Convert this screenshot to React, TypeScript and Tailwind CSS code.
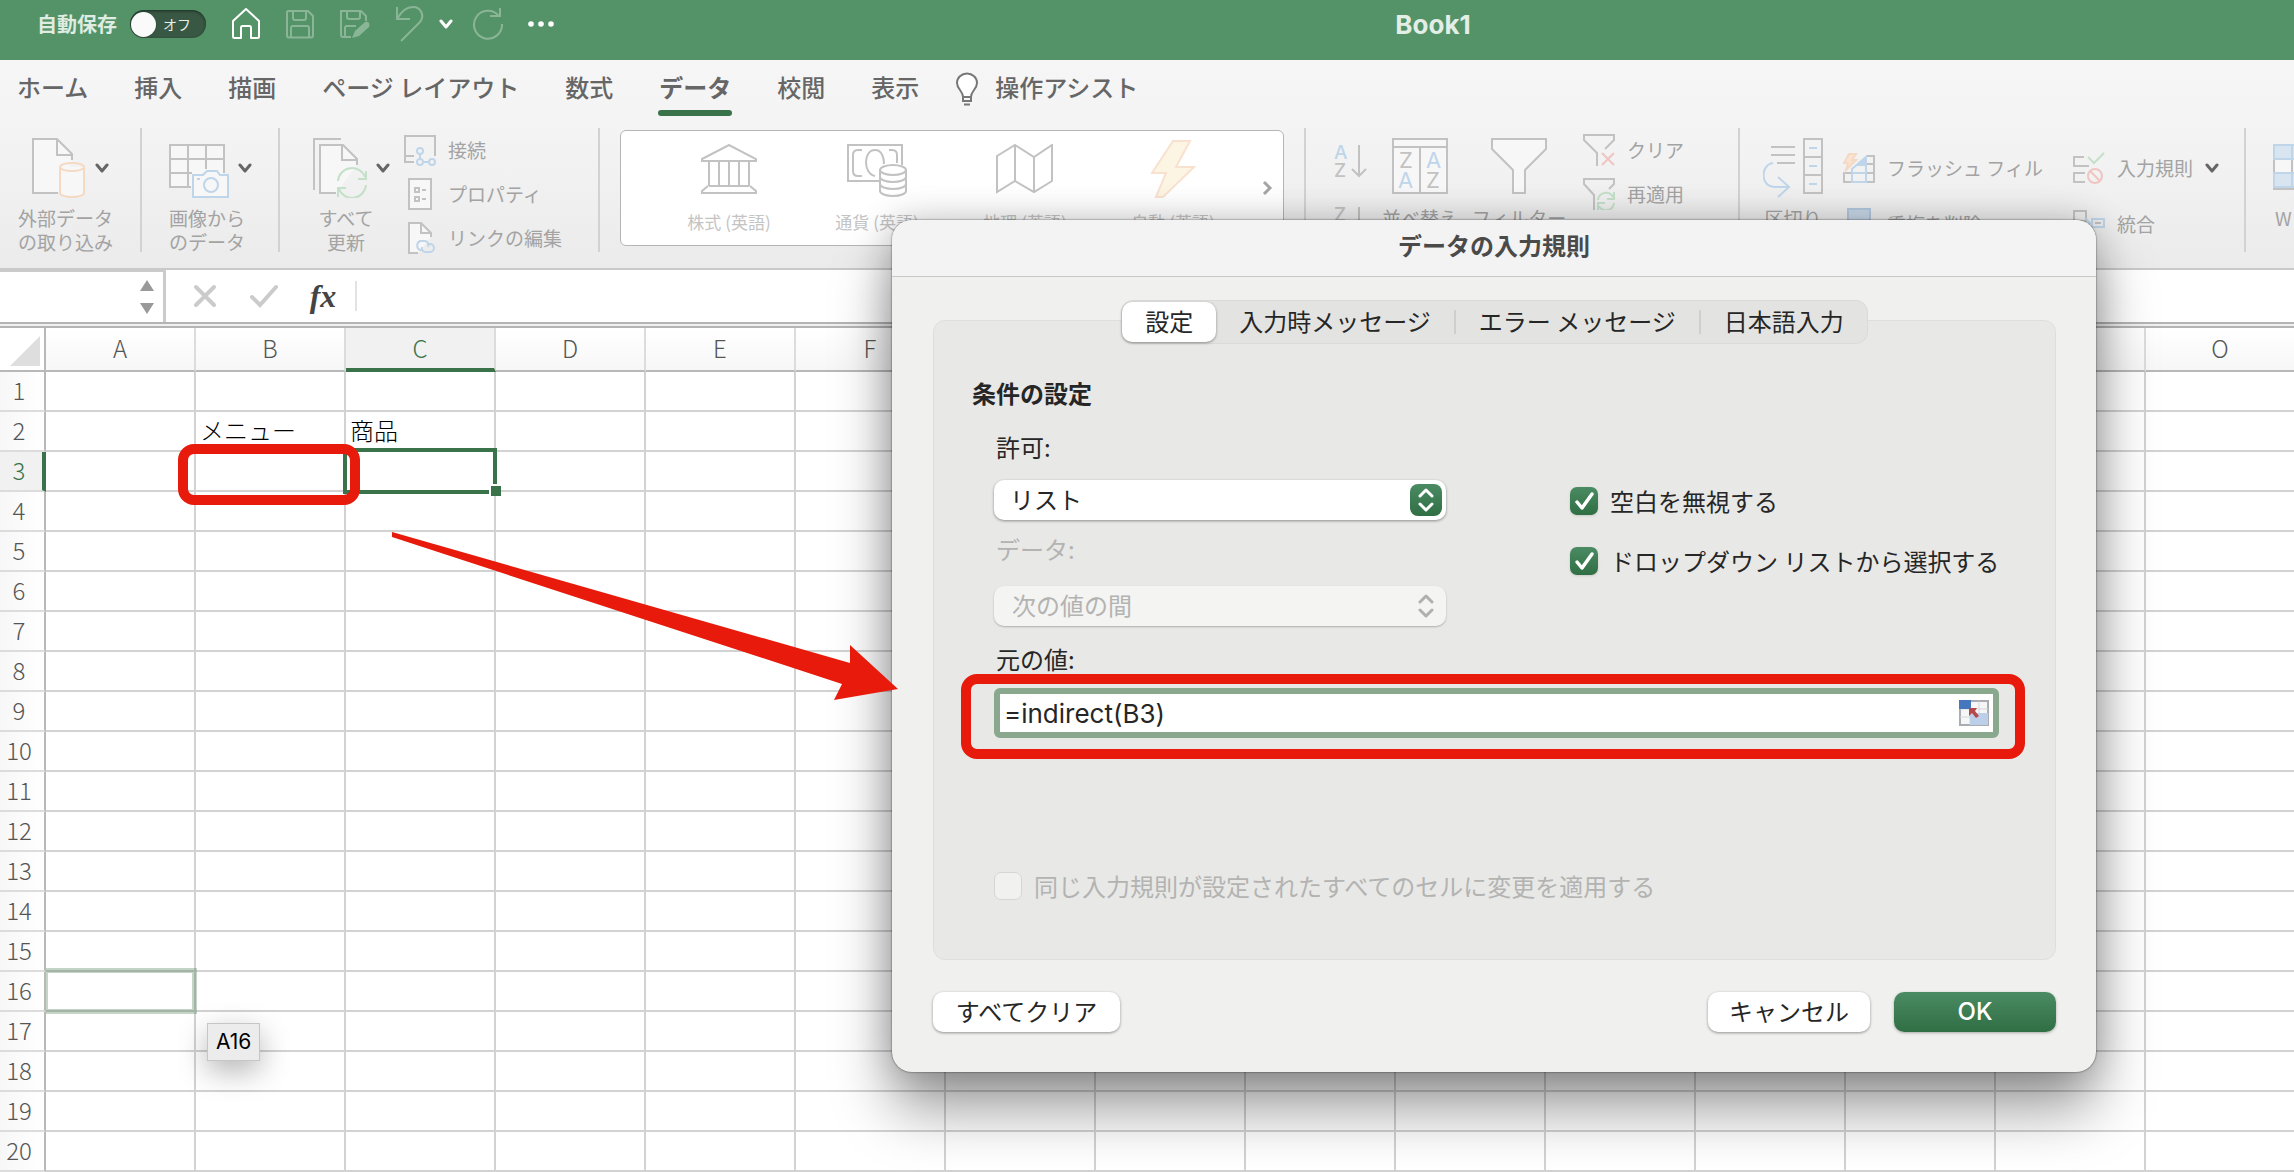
import type { ReactNode } from 'react';

const COLUMNS = ['A', 'B', 'C', 'D', 'E', 'F', 'G', 'H', 'I', 'J', 'K', 'L', 'M', 'N', 'O'];
const ROWS = Array.from({ length: 20 }, (_, i) => i + 1);

const CELLS: Record<string, string> = {
  B2: 'メニュー',
  C2: '商品',
};

const RIBBON_TABS = ['ホーム', '挿入', '描画', 'ページ レイアウト', '数式', 'データ', '校閲', '表示'];
const DIALOG_TABS = ['設定', '入力時メッセージ', 'エラー メッセージ', '日本語入力'];

const GRAY = '#c2c2c2';
const BLUE = '#bfd5ea';
const ORANGE = '#f4d9c3';
const GREEN = '#c5e0c8';
const RED = '#f0c4c1';

// --- Title bar ---

function TitleBar() {
  return (
    <header className="flex h-15 items-start bg-[#549368] text-white">
      <div className="flex h-12 w-[572px] shrink-0 items-center pl-[37px]">
        <span className="text-[20px] leading-7 font-bold text-[#dfece2]">自動保存</span>
        <button
          type="button"
          role="switch"
          aria-checked="false"
          aria-label="自動保存"
          className="ml-[13px] flex h-7 w-[76px] items-center rounded-full bg-[#385843] pl-px shadow-[inset_0_1px_3px_rgba(0,0,0,0.5)]"
        >
          <span className="h-[25px] w-[25px] rounded-full bg-[#fafafa] shadow-sm" />
          <span className="ml-[7px] text-[14px] leading-5 text-[#e6efe8]">オフ</span>
        </button>
        <button type="button" aria-label="ホーム" className="ml-[25px]">
          <svg width="30" height="32" viewBox="0 0 30 32" fill="none" stroke="#fff" strokeWidth="2" strokeLinejoin="round">
            <path d="M15 1 2 13v15.500q0 1.500 1.500 1.500H10V19.500q0-1.500 1.500-1.500h7q1.500 0 1.500 1.500V30h6.500q1.500 0 1.500-1.500V13Z" />
          </svg>
        </button>
        <button type="button" aria-label="保存" className="ml-6">
          <svg width="30" height="30" viewBox="0 0 30 30" fill="none" stroke="#8ab697" strokeWidth="2">
            <path d="M3 2h20l5 5v19.500q0 2-2 2H4q-2 0-2-2V3Z M8 2v7q0 2 2 2h9q2 0 2-2V2 M6 28v-9q0-2 2-2h14q2 0 2 2v9" />
          </svg>
        </button>
        <button type="button" aria-label="名前を付けて保存" className="ml-6">
          <svg width="32" height="32" viewBox="0 0 32 32" fill="none" stroke="#8ab697" strokeWidth="2">
            <path d="M12 29H4q-2 0-2-2V3h20l5 5v5 M8 3v6q0 2 2 2h9q2 0 2-2V3 M6 29V20q0-2 2-2h9" />
            <path d="M13 30l3-7 10-9q3-1 4 1t0 4L20 28Z" fill="#8ab697" stroke="none" />
          </svg>
        </button>
        <button type="button" aria-label="元に戻す" className="ml-6">
          <svg width="32" height="36" viewBox="0 0 32 36" fill="none" stroke="#8ab697" strokeWidth="2">
            <path d="M2 1v12h13 M2 13C7 4 12 1 18 1c8 0 12 9 7 15L6 35" />
          </svg>
        </button>
        <button type="button" aria-label="元に戻すの履歴" className="ml-3">
          <Chevron color="#fff" />
        </button>
        <button type="button" aria-label="繰り返し" className="ml-[18px]">
          <svg width="34" height="34" viewBox="0 0 34 34" fill="none" stroke="#8ab697" strokeWidth="2">
            <path d="M19 9h10V1 M28 9A14 14 0 1 0 31 17" />
          </svg>
        </button>
        <button type="button" aria-label="その他" className="ml-[22px]">
          <svg width="28" height="8" viewBox="0 0 28 8" fill="#fff">
            <circle cx="4" cy="4" r="2.800" />
            <circle cx="14" cy="4" r="2.800" />
            <circle cx="24" cy="4" r="2.800" />
          </svg>
        </button>
      </div>
      <h1 className="flex-1 pt-[9px] text-center font-[Inter,sans-serif] text-[26px] leading-8 font-bold text-[#e3eee6]">
        Book1
      </h1>
    </header>
  );
}

function Chevron({ color = '#666' }: { color?: string }) {
  return (
    <svg width="14" height="10" viewBox="0 0 14 10" fill="none" stroke={color} strokeWidth="3" strokeLinecap="round" strokeLinejoin="round">
      <path d="M2 2l5 6 5-6" />
    </svg>
  );
}

// --- Ribbon ---

function RibbonTabs() {
  return (
    <nav className="flex h-17 items-start gap-[46px] pt-[11px] pl-[17px] text-[24px] leading-8 font-medium text-[#666]">
      {RIBBON_TABS.map((tab) => (
        <button
          key={tab}
          type="button"
          className={
            tab === 'データ'
              ? 'relative h-10 pb-2 font-bold after:absolute after:inset-x-[-1px] after:bottom-[-5px] after:h-[6px] after:rounded-full after:bg-[#3a734a]'
              : 'h-10 pb-2'
          }
        >
          {tab}
        </button>
      ))}
      <button type="button" className="-ml-[10px] flex h-10 gap-4 pb-2">
        <svg className="mt-px" width="24" height="34" viewBox="0 0 24 34" fill="#fff" stroke="#777" strokeWidth="2">
          <path d="M8 25c0-6-6-8-6-14a10 9.500 0 0 1 20 0c0 6-6 8-6 14Z" />
          <path d="M8 25v4h8v-4 M9 32.500h6" fill="none" />
        </svg>
        操作アシスト
      </button>
    </nav>
  );
}

function Separator() {
  return <div className="h-[124px] w-0.5 shrink-0 bg-[#d2d2d2]" />;
}

function SmallButton({ icon, label, menu }: { icon: ReactNode; label: string; menu?: boolean }) {
  return (
    <button type="button" className="flex h-full w-full items-center gap-3 whitespace-nowrap">
      {icon}
      {label}
      {menu && <Chevron />}
    </button>
  );
}

function SvgIcon({ w, h, children }: { w: number; h: number; children: ReactNode }) {
  return (
    <svg className="shrink-0" width={w} height={h} viewBox={`0 0 ${w} ${h}`} fill="none" stroke={GRAY} strokeWidth="2">
      {children}
    </svg>
  );
}

function SortIcon({ top, bottom }: { top: string; bottom: string }) {
  return (
    <SvgIcon w={34} h={34}>
      <g stroke="none" fontFamily="Inter, sans-serif" fontSize="19" fontWeight="500">
        <text x="0" y="15" fill={top === 'A' ? BLUE : GRAY}>{top}</text>
        <text x="0" y="33" fill={bottom === 'A' ? BLUE : GRAY}>{bottom}</text>
      </g>
      <path d="M25 1v31 M18 25l7 7 7-7" />
    </SvgIcon>
  );
}

function GalleryItem({ icon, label }: { icon: ReactNode; label: string }) {
  return (
    <button type="button" className="flex w-[148px] flex-col items-center pt-2 text-[17px] leading-6 text-[#c4c4c4]">
      <span className="flex h-15 items-center">{icon}</span>
      <span className="mt-[11px]">{label}</span>
    </button>
  );
}

function Ribbon() {
  return (
    <div className="flex h-35 items-start overflow-hidden text-[19px] leading-6 text-[#a3a3a3]">
      <div className="w-35 shrink-0 pl-[18px]">
        <button type="button" className="pt-2.5">
          <span className="flex h-15 items-center gap-[9px] pl-[14px]">
            <SvgIcon w={54} h={60}>
              <path d="M26 55H1V1h24l15 15v6" fill="#f7f7f7" />
              <path d="M25 1v16h15" />
              <path d="M28 29v26a12 4 0 0 0 24 0V29" fill="#f7f7f7" stroke={ORANGE} />
              <ellipse cx="40" cy="29" rx="12" ry="4" stroke={ORANGE} />
            </SvgIcon>
            <Chevron />
          </span>
          <span className="mt-2 block text-center">外部データ<br />の取り込み</span>
        </button>
      </div>
      <Separator />
      <div className="w-[136px] shrink-0 pl-[27px]">
        <button type="button" className="flex flex-col items-start pt-2.5">
          <span className="flex h-15 items-center gap-[9px]">
            <SvgIcon w={60} h={60}>
              <path d="M22 49H1V7h54v28" fill="#f7f7f7" />
              <path d="M1 21h54 M1 35h22 M19 7v42 M37 7v24" />
              <path d="M24 37h10l4-4h10l3 4h8v22H24Z" fill="#f7f7f7" stroke={BLUE} />
              <circle cx="42" cy="47" r="7" stroke={BLUE} />
              <path d="M28 41h3" stroke={BLUE} />
            </SvgIcon>
            <Chevron />
          </span>
          <span className="mt-2 block text-center">画像から<br />のデータ</span>
        </button>
      </div>
      <Separator />
      <div className="flex w-[318px] shrink-0 pl-7">
        <button type="button" className="flex flex-col items-start pt-2.5">
          <span className="flex h-15 items-center gap-[9px] pl-[5px]">
            <SvgIcon w={54} h={60}>
              <path d="M1 52V1h27" />
              <path d="M23 55H7V7h23l14 14v6" fill="#f7f7f7" />
              <path d="M29 7v15h15" />
              <path d="M25 43a14 14 0 0 1 27-4 M53 33v8h-8 M53 47a14 14 0 0 1-27 4 M25 59v-9h8" stroke={GREEN} />
            </SvgIcon>
            <Chevron />
          </span>
          <span className="mt-2 block w-[76px] text-center">すべて<br />更新</span>
        </button>
        <div className="ml-[14px] grid auto-rows-[44px]">
          <SmallButton
            label="接続"
            icon={
              <SvgIcon w={32} h={32}>
                <path d="M10 28H1V2h30v20 M1 22h9" />
                <g stroke={BLUE}>
                  <circle cx="16" cy="17" r="3" />
                  <circle cx="16" cy="28" r="3" />
                  <circle cx="28" cy="28" r="3" />
                  <path d="M16 20v5 M19 28h6" />
                </g>
              </SvgIcon>
            }
          />
          <SmallButton
            label="プロパティ"
            icon={
              <SvgIcon w={32} h={32}>
                <path d="M5 1h22v30H5Z" fill="#f7f7f7" />
                <path d="M11 10h4v4h-4Z M11 19h4v4h-4Z M18 12h4 M18 21h4" />
              </SvgIcon>
            }
          />
          <SmallButton
            label="リンクの編集"
            icon={
              <SvgIcon w={32} h={32}>
                <path d="M14 31H5V1h12l10 10v4" fill="#f7f7f7" />
                <path d="M17 1v10h10" />
                <path d="M19 28h-3a5 5 0 0 1 0-9h5a4 4 0 0 1 3 6 M23 22h3a4 4 0 0 1 0 8h-5a4 4 0 0 1-3-5" stroke={BLUE} />
              </SvgIcon>
            }
          />
        </div>
      </div>
      <Separator />
      <div className="mx-5 mt-0.5 flex h-[116px] w-[664px] shrink-0 items-start rounded-md border border-[#b5b5b5] bg-white pl-[34px]">
        <GalleryItem
          label="株式 (英語)"
          icon={
            <SvgIcon w={56} h={50}>
              <path d="M1 15 28 1l27 14v2H1Z M8 17v25 M18 17v25 M28 17v25 M38 17v25 M48 17v25 M8 42h40 M7 42l-6 5v2h54v-2l-6-5" />
            </SvgIcon>
          }
        />
        <GalleryItem
          label="通貨 (英語)"
          icon={
            <SvgIcon w={60} h={56}>
              <path d="M32 40H1V4h54v20 M15 9h-4q-5 0-5 5v16q0 5 5 5h4 M42 9h3q5 0 5 5v8" />
              <path d="M28 35c-12-2-12-26 0-26 7 0 9 8 9 14" />
              <path d="M33 29v21a13 5 0 0 0 26 0V29" fill="#fff" />
              <ellipse cx="46" cy="29" rx="13" ry="5" fill="#fff" />
              <path d="M33 36a13 5 0 0 0 26 0 M33 43a13 5 0 0 0 26 0" />
            </SvgIcon>
          }
        />
        <GalleryItem
          label="地理 (英語)"
          icon={
            <SvgIcon w={58} h={50}>
              <path d="M1 12 19 1l19 12L56 1v36L38 48 19 37 1 48Z M19 1v36 M38 13v35" />
            </SvgIcon>
          }
        />
        <GalleryItem
          label="自動 (英語)"
          icon={
            <SvgIcon w={46} h={60}>
              <path d="M23 2h17L26 28h18L13 58H6l10-24H2Z" fill="#fdf5e4" stroke="#f8e2cf" />
            </SvgIcon>
          }
        />
        <button type="button" aria-label="次へ" className="mt-[49px] ml-[14px]">
          <svg width="12" height="16" viewBox="0 0 12 16" fill="none" stroke="#a5a5a5" strokeWidth="3">
            <path d="M3 2l6 6-6 6" />
          </svg>
        </button>
      </div>
      <Separator />
      <div className="flex w-[432px] shrink-0 pl-7">
        <div className="flex flex-col gap-7 pt-4">
          <button type="button" aria-label="昇順"><SortIcon top="A" bottom="Z" /></button>
          <button type="button" aria-label="降順"><SortIcon top="Z" bottom="A" /></button>
        </div>
        <button type="button" className="ml-[14px] flex w-[76px] flex-col items-center pt-2.5 whitespace-nowrap">
          <span className="flex h-15">
            <SvgIcon w={56} h={56}>
              <path d="M1 1h54v54H1Z" fill="#f7f7f7" />
              <path d="M1 9h54 M28 9v46" />
              <g stroke="none" fontFamily="Inter, sans-serif" fontSize="22">
                <text x="7" y="30" fill={GRAY}>Z</text>
                <text x="6" y="50" fill={BLUE}>A</text>
                <text x="34" y="30" fill={BLUE}>A</text>
                <text x="34" y="50" fill={GRAY}>Z</text>
              </g>
            </SvgIcon>
          </span>
          <span className="mt-2">並べ替え</span>
        </button>
        <button type="button" className="ml-[13px] flex w-24 flex-col items-center pt-2.5 whitespace-nowrap">
          <span className="flex h-15">
            <SvgIcon w={56} h={56}>
              <path d="M1 1h54v10L34 32v23H22V32L1 11Z" fill="#f7f7f7" />
            </SvgIcon>
          </span>
          <span className="mt-2">フィルター</span>
        </button>
        <div className="ml-4 grid auto-rows-[44px]">
          <SmallButton
            label="クリア"
            icon={
              <SvgIcon w={32} h={32}>
                <path d="M14 32V19L1 6V1h30v5l-9 9" />
                <path d="M19 19l12 12 M31 19 19 31" stroke={RED} />
              </SvgIcon>
            }
          />
          <SmallButton
            label="再適用"
            icon={
              <SvgIcon w={32} h={32}>
                <path d="M11 32V17L1 6V1h30v5l-5 5" />
                <path d="M15 22a8 8 0 0 1 15-3 M31 14v7h-7 M31 25a8 8 0 0 1-15 3 M15 32v-7h7" stroke={GREEN} />
              </SvgIcon>
            }
          />
        </div>
      </div>
      <Separator />
      <div className="flex w-[504px] shrink-0 pl-[23px]">
        <button type="button" className="flex w-15 flex-col items-center pt-2.5 whitespace-nowrap">
          <span className="flex h-15">
            <SvgIcon w={60} h={60}>
              <path d="M8 9h24 M8 17h24 M14 25h18" />
              <path d="M41 1h18v54H41Z M41 19h18 M41 37h18" />
              <path d="M46 10h8 M46 28h8 M46 46h8 M10 25C-3 27-3 49 12 49h13 M15 39l11 10-11 10" stroke={BLUE} />
            </SvgIcon>
          </span>
          <span className="mt-2">区切り</span>
        </button>
        <div className="ml-5 grid w-[230px] auto-rows-[56px] pt-3">
          <SmallButton
            label="フラッシュ フィル"
            icon={
              <SvgIcon w={32} h={32}>
                <path d="M24 4h7v26H1v-9h30 M24 12h7" />
                <path d="M9 30V17l14-12v25Z M9 21h14" stroke={BLUE} />
                <path d="M13 14 23 4v10Z" fill={BLUE} stroke="none" />
                <path d="M6 2h7l-4 6h4L3 18l2-7H1Z" fill="#f9e4d3" stroke={ORANGE} />
              </SvgIcon>
            }
          />
          <SmallButton
            label="重複を削除"
            icon={
              <SvgIcon w={32} h={32}>
                <path d="M5 1h22v30H5Z" fill="#c9d8e9" stroke="#b3c8e0" />
              </SvgIcon>
            }
          />
        </div>
        <div className="grid auto-rows-[56px] pt-3">
          <SmallButton
            menu
            label="入力規則"
            icon={
              <SvgIcon w={32} h={32}>
                <path d="M11 5H1v9h15 M12 21H1v9h11" />
                <path d="M15 5l6 6L31 1" stroke={GREEN} />
                <circle cx="22" cy="24" r="7" stroke={RED} />
                <path d="M17 19l10 10" stroke={RED} />
              </SvgIcon>
            }
          />
          <SmallButton
            label="統合"
            icon={
              <SvgIcon w={32} h={32}>
                <path d="M1 3h12v10H1Z M1 19h12v10H1Z" />
                <path d="M12 10l5 5-5 5 M19 11h12v8H19Z" stroke={BLUE} />
                <path d="M22 15h6" />
              </SvgIcon>
            }
          />
        </div>
      </div>
      <Separator />
      <button type="button" className="flex shrink-0 flex-col items-start pt-2.5 pl-[27px]">
        <span className="flex h-15">
          <SvgIcon w={60} h={60}>
            <path d="M1 7h58v44H1Z M19 7v44 M40 7v44" fill="#f7f7f7" />
            <path d="M1 7h58v14H1Z M1 35h58v14H1Z M19 7v14 M19 35v14" fill="#d8e4f0" stroke={BLUE} />
          </SvgIcon>
        </span>
        <span className="mt-2 pl-0.5">W</span>
      </button>
    </div>
  );
}

function FormulaBar() {
  return (
    <div className="flex h-[54px] items-center border-b-2 border-[#b4b4b4] bg-white">
      <div className="flex h-full w-[166px] items-center justify-end border-t-2 border-r-[3px] border-[#cbcbcb] pr-[9px]">
        <input aria-label="名前ボックス" className="h-full min-w-0 flex-1 px-2 text-[22px] leading-8 outline-none" />
        <svg width="14" height="34" viewBox="0 0 14 34" fill="#999">
          <path d="M7 0l7 11H0Z M0 23h14L7 34Z" />
        </svg>
      </div>
      <button type="button" aria-label="キャンセル" className="ml-[27px]">
        <svg width="24" height="24" viewBox="0 0 24 24" stroke="#cbcbcb" strokeWidth="4" strokeLinecap="round">
          <path d="M3 3l18 18 M21 3 3 21" />
        </svg>
      </button>
      <button type="button" aria-label="入力" className="ml-8">
        <svg width="30" height="24" viewBox="0 0 30 24" fill="none" stroke="#cbcbcb" strokeWidth="4" strokeLinecap="round">
          <path d="M3 13l8 8L27 3" />
        </svg>
      </button>
      <button
        type="button"
        aria-label="関数の挿入"
        className="ml-[26px] w-9 font-['Liberation_Serif',serif] text-[32px] leading-9 font-bold text-[#444] italic"
      >
        fx
      </button>
      <div className="ml-[14px] h-[30px] w-0.5 bg-[#e2e2e2]" />
      <input aria-label="数式バー" className="h-full flex-1 px-3 text-[22px] leading-8 outline-none" />
    </div>
  );
}

// --- Sheet ---

function Sheet() {
  return (
    <table className="w-full table-fixed border-separate border-spacing-0 bg-white">
      <colgroup>
        <col className="w-[46px]" />
        {COLUMNS.map((c) => (
          <col key={c} className={c === 'O' ? '' : 'w-[150px]'} />
        ))}
      </colgroup>
      <thead>
        <tr className="h-11 text-[24px] leading-8 text-[#555]">
          <th className="border-r-2 border-b-2 border-[#b8b8b8] p-0 align-bottom">
            <svg className="mb-1 ml-2.5" width="30" height="30" viewBox="0 0 30 30">
              <path d="M30 0v30H0Z" fill="#dedede" />
            </svg>
          </th>
          {COLUMNS.map((c) => (
            <th
              key={c}
              scope="col"
              className={
                c === 'C'
                  ? 'border-r-2 border-b-4 border-r-[#dcdcdc] border-b-[#3a734a] bg-[#f1f1f1] p-0 font-light text-[#3a734a]'
                  : c === 'O'
                    ? 'border-b-2 border-[#b8b8b8] bg-linear-to-b from-white to-[#f7f7f7] p-0 pb-0.5 font-light'
                    : 'border-r-2 border-b-2 border-r-[#dcdcdc] border-b-[#b8b8b8] bg-linear-to-b from-white to-[#f7f7f7] p-0 pb-0.5 font-light'
              }
            >
              {c}
            </th>
          ))}
        </tr>
      </thead>
      <tbody>
        {ROWS.map((r) => (
          <tr key={r} className="h-10 text-[24px] leading-8">
            <th
              scope="row"
              className={
                r === 3
                  ? 'border-r-4 border-b-2 border-r-[#3a734a] border-b-[#dcdcdc] bg-[#f1f1f1] p-0 pr-1 pb-[3px] font-light text-[#3a734a]'
                  : 'border-r-2 border-b-2 border-r-[#b8b8b8] border-b-[#dcdcdc] bg-linear-to-r from-[#f7f7f7] to-white p-0 pr-1.5 pb-[3px] font-light text-[#555]'
              }
            >
              {r}
            </th>
            {COLUMNS.map((c) => (
              <td
                key={c}
                className={
                  c === 'O'
                    ? 'border-b-2 border-[#d2d2d2] p-0'
                    : 'border-r-2 border-b-2 border-[#d2d2d2] p-0 pb-[3px] pl-1 font-light whitespace-nowrap text-black'
                }
              >
                {CELLS[`${c}${r}`]}
              </td>
            ))}
          </tr>
        ))}
      </tbody>
    </table>
  );
}

// Markers that float above the cells
function SheetOverlays() {
  return (
    <>
      <div className="pointer-events-none absolute top-[448px] left-[343px] h-[46px] w-[154px] border-4 border-[#3a734a]">
        <div className="absolute -right-2 -bottom-1.5 h-3 w-3 border-t-2 border-l-2 border-white bg-[#3a734a]" />
      </div>
      <div className="pointer-events-none absolute top-[968px] left-[46px] h-[46px] w-[151px] border-[5px] border-l-2 border-[#3a734a]/30" />
      <div
        role="tooltip"
        className="absolute top-[1023px] left-[207px] border border-[#c6c6c6] bg-[#ececec] px-2 py-1 font-[Inter,sans-serif] text-[21px] leading-7 text-black shadow-[0_10px_30px_rgba(0,0,0,0.3)]"
      >
        A16
      </div>
      <div className="pointer-events-none absolute top-[444px] left-[178px] h-[61px] w-[182px] rounded-2xl border-10 border-[#e71a0c]" />
    </>
  );
}

// --- Dialog ---

function Dropdown({ id, value, disabled }: { id: string; value: string; disabled?: boolean }) {
  return (
    <div className="relative">
      <select
        id={id}
        disabled={disabled}
        className={
          disabled
            ? 'h-10 w-full appearance-none rounded-[10px] bg-[#f4f4f2] pb-0.5 pl-[18px] text-[#b3b3b2] opacity-100 shadow-[0_1px_2px_rgba(0,0,0,0.25)]'
            : 'h-10 w-full appearance-none rounded-[10px] bg-white pb-0.5 pl-4 text-[#262626] shadow-[0_1px_3px_rgba(0,0,0,0.4)]'
        }
      >
        <option>{value}</option>
      </select>
      <span
        className={
          disabled
            ? 'pointer-events-none absolute top-1 right-1 flex h-8 w-8 items-center justify-center'
            : 'pointer-events-none absolute top-1 right-1 flex h-8 w-8 items-center justify-center rounded-lg bg-linear-to-b from-[#4b8b63] to-[#306f44]'
        }
      >
        <svg width="18" height="24" viewBox="0 0 18 24" fill="none" stroke={disabled ? '#b0b0af' : '#fff'} strokeWidth="3" strokeLinecap="round" strokeLinejoin="round">
          <path d="M3 8l6-6 6 6 M3 16l6 6 6-6" />
        </svg>
      </span>
    </div>
  );
}

function Check({ id, label }: { id: string; label: string }) {
  return (
    <div className="flex h-7 items-center gap-3">
      <span className="relative h-7 w-7">
        <input
          id={id}
          type="checkbox"
          defaultChecked
          className="h-7 w-7 appearance-none rounded-[7px] bg-linear-to-b from-[#4b8b63] to-[#306f44] shadow-sm"
        />
        <svg className="pointer-events-none absolute inset-0" width="28" height="28" viewBox="0 0 28 28" fill="none" stroke="#fff" strokeWidth="3.500" strokeLinecap="round" strokeLinejoin="round">
          <path d="M7 15l5 6L22 7" />
        </svg>
      </span>
      <label htmlFor={id} className="whitespace-nowrap">{label}</label>
    </div>
  );
}

function ValidationDialog() {
  return (
    <div
      role="dialog"
      aria-labelledby="dialog-title"
      className="absolute top-[220px] left-[892px] w-[1204px] rounded-[20px] bg-[#f0f0ee] text-[24px] leading-8 text-[#262626] shadow-[0_0_2px_rgba(0,0,0,0.7),0_0_36px_rgba(0,0,0,0.2),0_36px_60px_rgba(0,0,0,0.4)]"
    >
      <h2 id="dialog-title" className="h-[57px] rounded-t-[20px] border-b border-[#c9c9c9] bg-[#f3f3f3] pt-[9px] text-center font-bold text-[#4a4a4a]">
        データの入力規則
      </h2>
      <div className="pt-[23px] pr-10 pb-10 pl-[41px]">
        <div role="tablist" className="relative -mb-6 flex justify-center">
          <div className="flex h-11 items-center rounded-[12px] border border-[#dbdbd9] bg-[#e3e3e1]">
            {DIALOG_TABS.map((tab, i) => (
              <div key={tab} className="flex items-center">
                {i > 1 && <span className="h-6 w-0.5 bg-[#cfcfcd]" />}
                <button
                  type="button"
                  role="tab"
                  aria-selected={i === 0}
                  className={
                    i === 0
                      ? 'h-10 rounded-[10px] bg-white px-[23px] pb-[3px] shadow-[0_1px_3px_rgba(0,0,0,0.4)]'
                      : 'h-10 px-[23px] pb-[3px]'
                  }
                >
                  {tab}
                </button>
              </div>
            ))}
          </div>
        </div>

        <div role="tabpanel" className="rounded-[12px] border border-[#dedede] bg-[#e8e8e6] pt-14 pb-[59px] pl-[60px]">
          <h3 className="-ml-[22px] font-bold">条件の設定</h3>
          <div className="mt-[22px] flex gap-[124px]">
            <div className="w-[452px]">
              <label htmlFor="allow" className="mb-[17px] block pl-0.5">許可:</label>
              <Dropdown id="allow" value="リスト" />
              <label htmlFor="data" className="mt-[13px] mb-[21px] block pl-0.5 text-[#b3b3b2]">データ:</label>
              <Dropdown id="data" value="次の値の間" disabled />
            </div>
            <div className="flex flex-col gap-8 pt-14">
              <Check id="ignore-blank" label="空白を無視する" />
              <Check id="in-cell" label="ドロップダウン リストから選択する" />
            </div>
          </div>
          <label htmlFor="source" className="mt-[17px] mb-[13px] block pl-0.5">元の値:</label>
          <div className="relative mr-14 flex h-[50px] items-center rounded-md border-[6px] border-[#8aa88d] bg-white pr-1">
            <input
              id="source"
              defaultValue="=indirect(B3)"
              className="h-full flex-1 pl-1 font-[Inter,sans-serif] text-[26px] leading-8 outline-none"
            />
            <button type="button" aria-label="範囲を選択">
              <svg width="30" height="26" viewBox="0 0 30 26">
                <path d="M1 1h28v24H1Z" fill="#f6f6f6" stroke="#a9adb3" strokeWidth="2" />
                <path d="M11 1v24 M20 1v24 M1 9h28 M1 17h28" stroke="#d3d7dd" />
                <path d="M0 0h12v9H0Z" fill="#4577bd" />
                <path d="M11 13h18v12H11Z" fill="#bccfe8" />
                <path d="M10 8h8l-2 3 4 5-3 2-4-5-3 3Z" fill="#b5484a" />
              </svg>
            </button>
            <div className="pointer-events-none absolute -top-5 -right-8 -bottom-[27px] -left-[39px] rounded-2xl border-10 border-[#e71a0c]" />
          </div>
          <div className="mt-[134px] flex h-7 items-center gap-3 text-[#b3b3b2]">
            <input
              id="apply-all"
              type="checkbox"
              disabled
              className="h-7 w-7 appearance-none rounded-[7px] border border-[#d6d6d4] bg-[#f1f1ef]"
            />
            <label htmlFor="apply-all">同じ入力規則が設定されたすべてのセルに変更を適用する</label>
          </div>
        </div>

        <div className="mt-8 flex items-center gap-6">
          <button type="button" className="h-10 w-[187px] rounded-[10px] bg-white pb-0.5 shadow-[0_1px_3px_rgba(0,0,0,0.4)]">
            すべてクリア
          </button>
          <button type="button" className="ml-auto h-10 w-[162px] rounded-[10px] bg-white pb-0.5 shadow-[0_1px_3px_rgba(0,0,0,0.4)]">
            キャンセル
          </button>
          <button
            type="button"
            className="h-10 w-[162px] rounded-[10px] bg-linear-to-b from-[#4b8b63] to-[#306f44] font-[Inter,sans-serif] font-medium text-white shadow-[0_1px_3px_rgba(0,0,0,0.3)]"
          >
            OK
          </button>
        </div>
      </div>
    </div>
  );
}

export default function App() {
  return (
    <div className="relative min-h-screen overflow-hidden bg-white font-['Noto_Sans_CJK_JP',sans-serif]">
      <TitleBar />
      <div className="border-b-2 border-[#c9c9c9] bg-linear-to-b from-[#f6f6f6] via-[#f2f2f2] to-[#ebebeb]">
        <RibbonTabs />
        <Ribbon />
      </div>
      <FormulaBar />
      <div className="h-1 border-b-2 border-[#b4b4b4] bg-[#f0f0f0]" />
      <Sheet />
      <SheetOverlays />
      <ValidationDialog />
      {/* Arrow from the cell to the source field */}
      <svg className="pointer-events-none absolute top-[532px] left-[392px]" width="506" height="168" viewBox="0 0 506 168">
        <path d="M0 0v5l450 147-8 16 64-11-48-44v18Z" fill="#e71a0c" />
      </svg>
    </div>
  );
}
